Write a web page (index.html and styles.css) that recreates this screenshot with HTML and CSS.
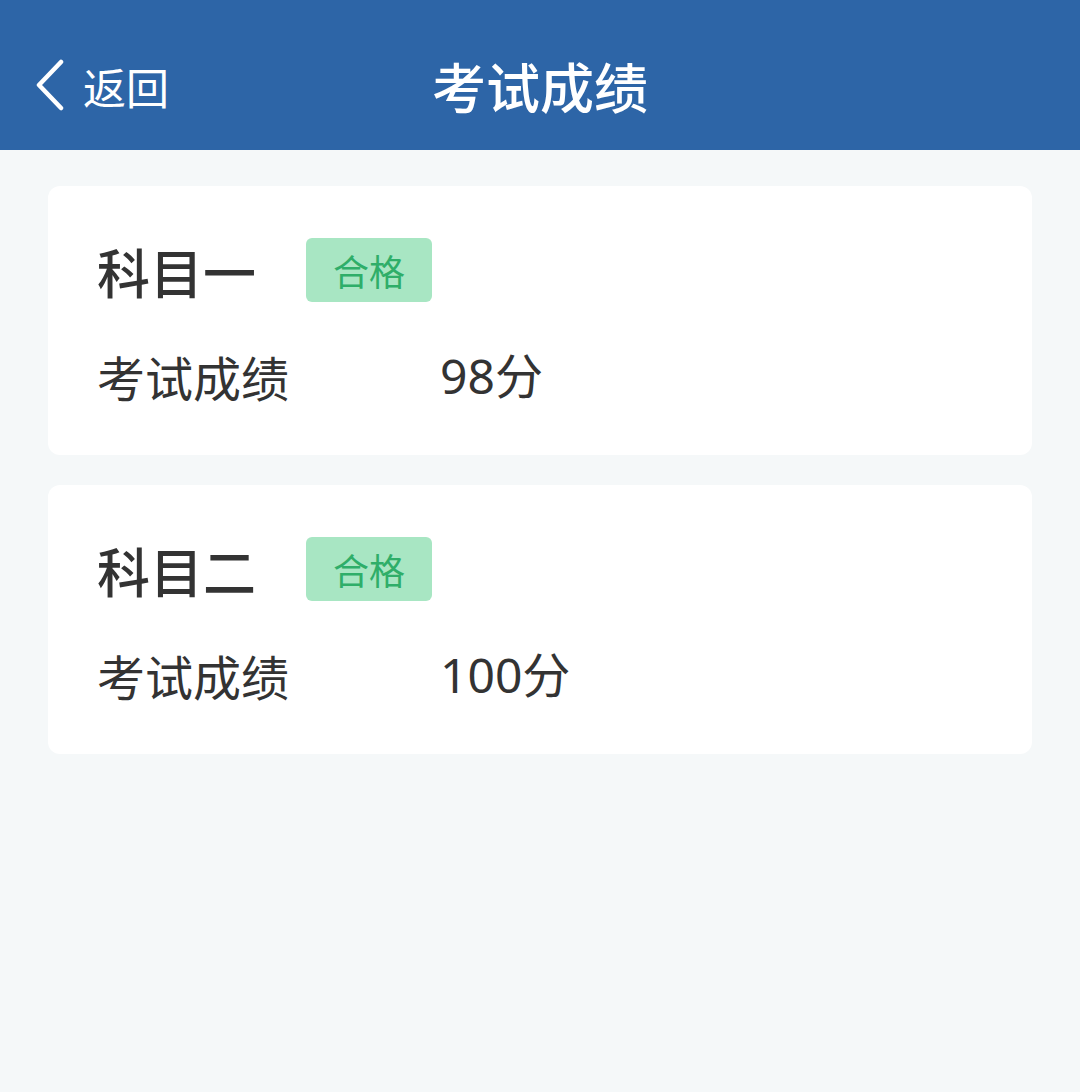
FILE: index.html
```html
<!DOCTYPE html>
<html lang="zh-CN">
<head>
<meta charset="utf-8">
<title>考试成绩</title>
<link rel="stylesheet" href="styles.css">
</head>
<body>
<header class="navbar">
  <div class="back">
    <svg class="back-icon" width="34" height="52" viewBox="0 0 34 52">
      <polyline points="27,3 5,26 27,49" fill="none" stroke="#ffffff" stroke-width="4.5" stroke-linecap="round" stroke-linejoin="round"/>
    </svg>
    <span class="back-text">返回</span>
  </div>
  <h1 class="nav-title">考试成绩</h1>
</header>
<main class="list">
  <section class="card">
    <div class="card-head">
      <span class="subject">科目一</span>
      <span class="badge">合格</span>
    </div>
    <div class="row">
      <span class="label">考试成绩</span>
      <span class="value">98分</span>
    </div>
  </section>
  <section class="card">
    <div class="card-head">
      <span class="subject">科目二</span>
      <span class="badge">合格</span>
    </div>
    <div class="row">
      <span class="label">考试成绩</span>
      <span class="value">100分</span>
    </div>
  </section>
</main>
</body>
</html>
```
FILE: styles.css
```css
* { box-sizing: border-box; }
html, body {
  margin: 0;
  padding: 0;
  background: #f5f8f9;
  font-family: "Noto Sans CJK SC", "Noto Sans", sans-serif;
  color: #333333;
}
.navbar {
  position: relative;
  height: 150px;
  padding-top: 22px;
  background: #2d65a7;
  display: flex;
  align-items: center;
  justify-content: center;
}
.back {
  position: absolute;
  left: 34px;
  top: 22px;
  bottom: 0;
  display: flex;
  align-items: center;
  gap: 14px;
  color: #ffffff;
}
.back-icon { display: block; margin-top: -2px; }
.back-text {
  font-size: 43px;
  line-height: 1;
  margin-left: 1px;
}
.nav-title {
  margin: 0;
  font-size: 54px;
  font-weight: 500;
  color: #ffffff;
  line-height: 1;
}
.list {
  padding: 36px 48px;
  display: flex;
  flex-direction: column;
  gap: 30px;
}
.card {
  background: #ffffff;
  border-radius: 12px;
  padding: 52px 48px 45px 49px;
}
.card-head {
  display: flex;
  align-items: center;
  height: 64px;
}
.subject {
  font-size: 53px;
  font-weight: 500;
  line-height: 64px;
  width: 209px;
  margin-top: 2px;
}
.badge {
  width: 126px;
  height: 64px;
  border-radius: 6px;
  background: #a8e6c3;
  color: #2fae69;
  font-size: 36px;
  display: flex;
  align-items: center;
  justify-content: center;
  line-height: 1;
}
.row {
  display: flex;
  align-items: center;
  margin-top: 44px;
  height: 64px;
}
.label {
  width: 343px;
  font-size: 48px;
  line-height: 64px;
  margin-top: -4px;
}
.value {
  font-family: "Noto Sans", "Noto Sans CJK SC", sans-serif;
  font-size: 48px;
  line-height: 64px;
  margin-top: -4px;
}
```
